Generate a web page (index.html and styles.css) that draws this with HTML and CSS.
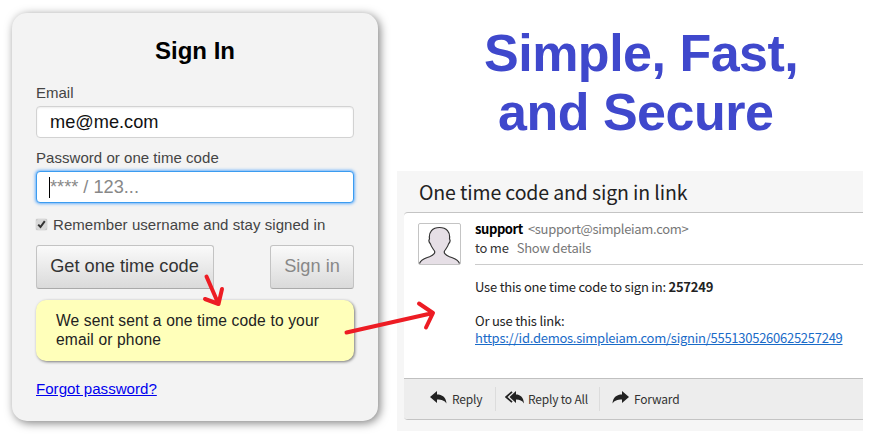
FILE: index.html
```html
<!DOCTYPE html>
<html lang="en">
<head>
<meta charset="utf-8">
<title>Sign In</title>
<link rel="stylesheet" href="styles.css">
</head>
<body>
<main class="page">
  <form class="card">
    <h1 class="card-title">Sign In</h1>
    <label class="label" for="email">Email</label>
    <div class="field" id="email">me@me.com</div>
    <label class="label label-code" for="code">Password or one time code</label>
    <div class="field focused" id="code"><span class="caret"></span>**** / 123...</div>
    <div class="remember">
      <span class="check"><svg viewBox="0 0 11 11" width="11" height="11"><path d="M2.2 5.6 4.5 8 8.8 2.2" fill="none" stroke="#333" stroke-width="2"/></svg></span>
      <span>Remember username and stay signed in</span>
    </div>
    <div class="buttons">
      <button type="button" class="btn btn-code">Get one time code</button>
      <button type="button" class="btn btn-sign">Sign in</button>
    </div>
    <div class="notice">We sent sent a one time code to your<br>email or phone</div>
    <a class="forgot" href="#">Forgot password?</a>
  </form>

  <div class="right">
    <h2 class="slogan"><span class="line-one">Simple, Fast,</span><span class="line-two">and Secure</span></h2>
    <section class="mail">
      <h3 class="subject">One time code and sign in link</h3>
      <div class="message">
        <div class="head">
          <svg class="avatar" viewBox="0 0 43 42" width="43" height="42">
            <rect x=".5" y=".5" width="42" height="41" rx="1.5" fill="#fff" stroke="#c4c4c4"/>
            <path d="M1.5 41C3 36 7 35.500 12 33.500C15.500 32 17.500 30 16.500 28C14.500 25 13 23.500 12.500 21C11 19.500 10.500 17.500 11.500 16C10.500 9 14.500 4.500 21.500 4.500S32.500 9 31.500 16C32.500 17.500 32 19.500 30.500 21C30 23.500 28.500 25 26.500 28C25.500 30 27.500 32 31 33.500C36 35.500 40 36 41.500 41Z" fill="#e6dfe6"/>
            <path d="M1.500 40.500C3 36 7 35.500 12 33.500C15.500 32 17.500 30 16.500 28C14.500 25 13 23.500 12.500 21C11 19.500 10.500 17.500 11.500 16C10.500 9 14.500 4.500 21.500 4.500S32.500 9 31.500 16C32.500 17.500 32 19.500 30.500 21C30 23.500 28.500 25 26.500 28C25.500 30 27.500 32 31 33.500C36 35.500 40 36 41.500 40.500" fill="none" stroke="#333" stroke-width="1.200"/>
          </svg>
          <div class="from">
            <div><b>support</b><span class="addr">&lt;support@simpleiam.com&gt;</span></div>
            <div>to me<span class="details">Show details</span></div>
          </div>
        </div>
        <div class="body">
          <p>Use this one time code to sign in: <b>257249</b></p>
          <p class="second">Or use this link:</p>
          <a class="link" href="#">https://id.demos.simpleiam.com/signin/5551305260625257249</a>
        </div>
        <div class="actions">
          <span class="action reply"><svg viewBox="0 0 17 13" width="17" height="13"><path d="M0 6 7 0V3.500C12 3.500 16 6 16.500 12.500C14.500 9.500 12 8.500 7 8.500V12Z"/></svg>Reply</span>
          <span class="action reply-all"><svg viewBox="0 0 19 13" width="19" height="13"><path d="M4.500 6 11 0V3.500C15 3.500 18.500 6 19 12.500C17 9.500 15 8.500 11 8.500V12Z"/><path d="M7 .8 1.200 6 7 11.200" fill="none" stroke="#222" stroke-width="1.800"/></svg>Reply to All</span>
          <span class="action forward"><svg viewBox="0 0 17 13" width="17" height="13"><path d="M17 6 10 0V3.500C5 3.500 1 6 .5 12.500C2.500 9.500 5 8.500 10 8.500V12Z"/></svg>Forward</span>
        </div>
      </div>
    </section>
  </div>
  <svg class="arrows" viewBox="0 0 880 437" width="880" height="437">
    <g fill="none" stroke="#ed1c24" stroke-width="4" stroke-linecap="round" stroke-linejoin="round">
      <path d="M206.500 276.500 218.500 304M205 299 218.500 304 222 289"/>
      <path d="M346.500 332.500 433 313M419 303.500 433 313 426 327.500"/>
    </g>
  </svg>
</main>
</body>
</html>
```
FILE: styles.css
```css
* { box-sizing: border-box; }
body { margin: 0; background: #fff; font-family: "Liberation Sans", Arial, sans-serif; }
h1, h2, h3, p { margin: 0; }
.page { position: relative; display: flex; width: 880px; height: 437px; overflow: hidden; }
.card {
  display: flex; flex-direction: column; flex: none;
  width: 366px; height: 408px; margin: 13px 0 0 12px; padding: 24px 24px 0;
  background: #f3f3f3; border-radius: 15px;
  box-shadow: 2px 2px 10px rgba(0, 0, 0, .5);
  font-size: 15px; color: #444;
}
.card-title { height: 28px; line-height: 28px; font-size: 24px; text-align: center; color: #000; }
.label { height: 18px; line-height: 18px; margin-top: 19px; }
.label-code { margin-top: 11px; letter-spacing: .04px; }
.field {
  display: flex; align-items: center; height: 32px; margin-top: 4px; padding: 0 13px;
  border: 1px solid #d2d2d2; border-radius: 4px; background: #fff;
  box-shadow: inset 0 1px 2px rgba(0, 0, 0, .08); font-size: 18.200px; color: #111;
}
.focused { border-color: #3b9cf0; box-shadow: 0 0 3px 1px rgba(59, 153, 252, .75); color: #888; }
.caret { width: 1px; height: 21px; margin: 0 0 0 -1px; background: #000; }
.remember { display: flex; align-items: center; gap: 6px; height: 18px; margin-top: 12px; letter-spacing: .06px; }
.check { width: 11px; height: 11px; border-radius: 2px; background: #d8d8d8; box-shadow: 0 0 1px #777; }
.check svg { display: block; }
.buttons { display: flex; justify-content: space-between; margin-top: 12px; }
.btn {
  height: 44px; padding: 0 0 2px; border: 1px solid #c3c3c3; border-bottom-color: #aaa; border-radius: 3px;
  background: linear-gradient(#fafafa, #dadada); font: 18.200px "Liberation Sans", Arial, sans-serif; color: #333;
}
.btn-code { width: 178px; padding-right: 1px; }
.btn-sign { width: 84px; color: #888; }
.notice {
  height: 61px; margin-top: 11px; padding: 12px 20px; border-radius: 10px; background: #ffffba;
  box-shadow: 1px 1px 3px rgba(0, 0, 0, .5); line-height: 18.500px; font-size: 15.600px; letter-spacing: .14px; color: #222; white-space: nowrap;
}
.forgot { align-self: flex-start; margin-top: 19px; line-height: 18px; color: #00e; font-size: 15.100px; }
.right { width: 466px; margin-left: 19px; }
.slogan { height: 171px; padding-top: 24px; font-size: 52px; line-height: 59px; letter-spacing: -.5px; color: #3f48cc; white-space: nowrap; }
.slogan span { display: block; }
.line-one { margin-left: 87px; }
.line-two { margin-left: 101px; }
.mail { height: 260px; padding-left: 7px; background: #f6f6f6; font-family: "Noto Sans CJK SC", "Noto Sans", sans-serif; }
.subject { height: 41px; padding-left: 15px; line-height: 41px; font-size: 19.500px; letter-spacing: -.13px; font-weight: 400; color: #222; }
.message { height: 208px; display: flex; flex-direction: column; border: solid #c4c4c4; border-width: 1px 0; border-radius: 4px 0 0 4px; background: #fff; overflow: hidden; }
.head { display: flex; flex: none; height: 53px; padding: 10px 0 0 14px; }
.avatar { flex: none; }
.from { flex: 1; height: 42px; margin-left: 14px; border-bottom: 1px solid #ccc; font-size: 13px; letter-spacing: -.22px; line-height: 19px; color: #333; }
.from > div { height: 19px; }
.from > div:first-child { margin-top: -4px; }
.from b { color: #000; letter-spacing: -.4px; }
.addr { margin-left: 5px; letter-spacing: -.33px; color: #777; }
.details { margin-left: 8px; color: #777; }
.body { flex: 1; padding: 12px 0 0 71px; font-size: 13px; letter-spacing: -.22px; line-height: 17px; color: #222; white-space: nowrap; }
.body p { height: 17px; }
.body .second { margin-top: 17px; }
.link { display: block; width: max-content; letter-spacing: -.265px; color: #1a6bc8; }
.actions { display: flex; flex: none; align-items: center; height: 41px; border-top: 1px solid #c0c0c0; background: #ededed; font-size: 12px; letter-spacing: -.2px; color: #333; }
.action { display: flex; align-items: center; height: 24px; line-height: 24px; }
.action svg { flex: none; fill: #222; margin-top: -3px; }
.reply { width: 92px; padding-left: 26px; gap: 5px; border-right: 1px solid #dcdcdc; }
.reply-all { width: 104px; padding-left: 9px; gap: 4px; border-right: 1px solid #dcdcdc; }
.forward { padding-left: 12px; gap: 5px; }
.arrows { position: absolute; left: 0; top: 0; pointer-events: none; }
```
